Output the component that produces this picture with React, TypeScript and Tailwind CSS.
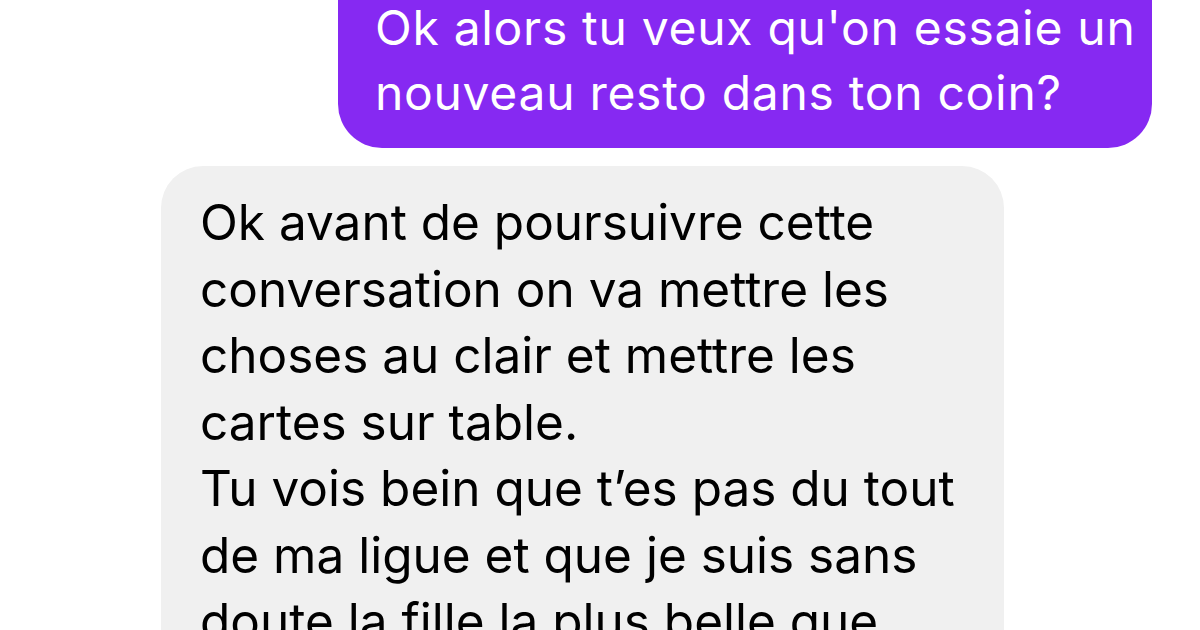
export default function App() {
  const grayLines = [
    "Ok avant de poursuivre cette",
    "conversation on va mettre les",
    "choses au clair et mettre les",
    "cartes sur table.",
    "Tu vois bein que t\u2019es pas du tout",
    "de ma ligue et que je suis sans",
    "doute la fille la plus belle que",
  ];
  return (
    <div className="w-[1200px] h-[630px] overflow-hidden bg-white relative" style={{ fontFamily: "Inter, 'Liberation Sans', sans-serif" }}>
      <div className="flex justify-end pr-[48px] mt-[-60px]">
        <div className="w-[814px] h-[208px] rounded-[44px] bg-[#8629f2] text-white pl-[37px] pt-[55px] text-[48px] leading-[65px] tracking-[0.7px]">
          <div className="whitespace-nowrap">Ok alors tu veux qu'on essaie un</div>
          <div className="whitespace-nowrap">nouveau resto dans ton coin?</div>
        </div>
      </div>
      <div className="ml-[161px] mt-[18px] w-[843px] h-[600px] rounded-[42px] bg-[#f0f0f0] text-black pl-[39px] pt-[23px] text-[49.5px] leading-[66.5px]">
        {grayLines.map((l, i) => (
          <div key={i} className="whitespace-nowrap">{l}</div>
        ))}
      </div>
    </div>
  );
}
